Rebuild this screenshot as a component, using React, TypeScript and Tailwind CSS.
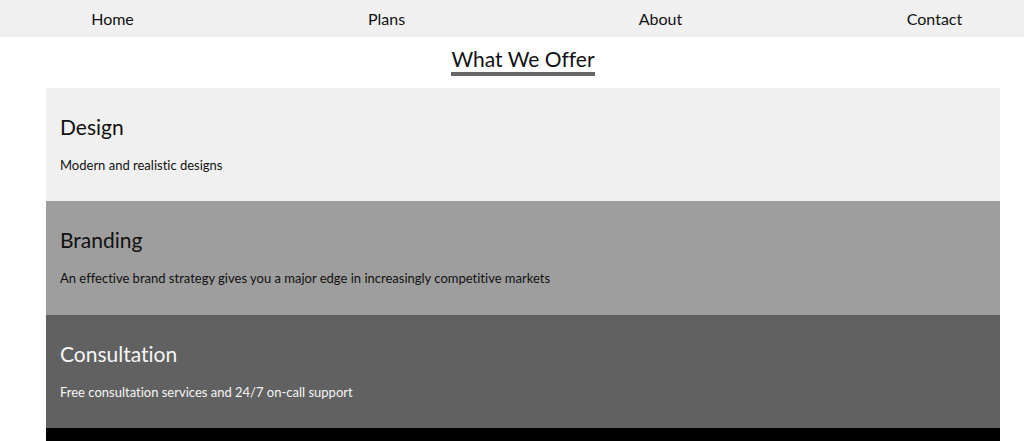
import React from "react";

const items = [
  { title: "Design", text: "Modern and realistic designs", cls: "bg-[#f0f0f0] text-[#111111]" },
  {
    title: "Branding",
    text: "An effective brand strategy gives you a major edge in increasingly competitive markets",
    cls: "bg-[#9e9e9e] text-[#111111]",
  },
  {
    title: "Consultation",
    text: "Free consultation services and 24/7 on-call support",
    cls: "bg-[#616161] text-[#f5f5f5]",
  },
];

export default function App() {
  return (
    <div
      className="h-[441px] bg-white overflow-hidden [font-variant-ligatures:none]"
      style={{ fontFamily: "Lato, 'Noto Sans', sans-serif" }}
    >
      <nav className="h-[37px] bg-[#f0f0f0] overflow-hidden">
        <ul className="flex gap-[49px] h-full items-center">
          {["Home", "Plans", "About", "Contact"].map((n) => (
            <li key={n} className="w-[225px] shrink-0 text-center text-[16px] text-[#111111]">
              {n}
            </li>
          ))}
        </ul>
      </nav>
      <section className="ml-[46px] w-[954px]">
        <div className="flex justify-center mt-[9px]">
          <h1 className="text-[21px] leading-[26px] text-[#111111] border-b-[4px] border-[#666666]">What We Offer</h1>
        </div>
        <div className="mt-[12px] flex flex-col">
          {items.map((it) => (
            <div key={it.title} className={`h-[113.3px] px-[14px] pt-[26px] ${it.cls}`}>
              <h2 className="text-[21px] leading-[26px]">{it.title}</h2>
              <p className="mt-[17px] text-[13px] leading-[17px]">{it.text}</p>
            </div>
          ))}
          <div className="h-[60px] bg-black" />
        </div>
      </section>
    </div>
  );
}
